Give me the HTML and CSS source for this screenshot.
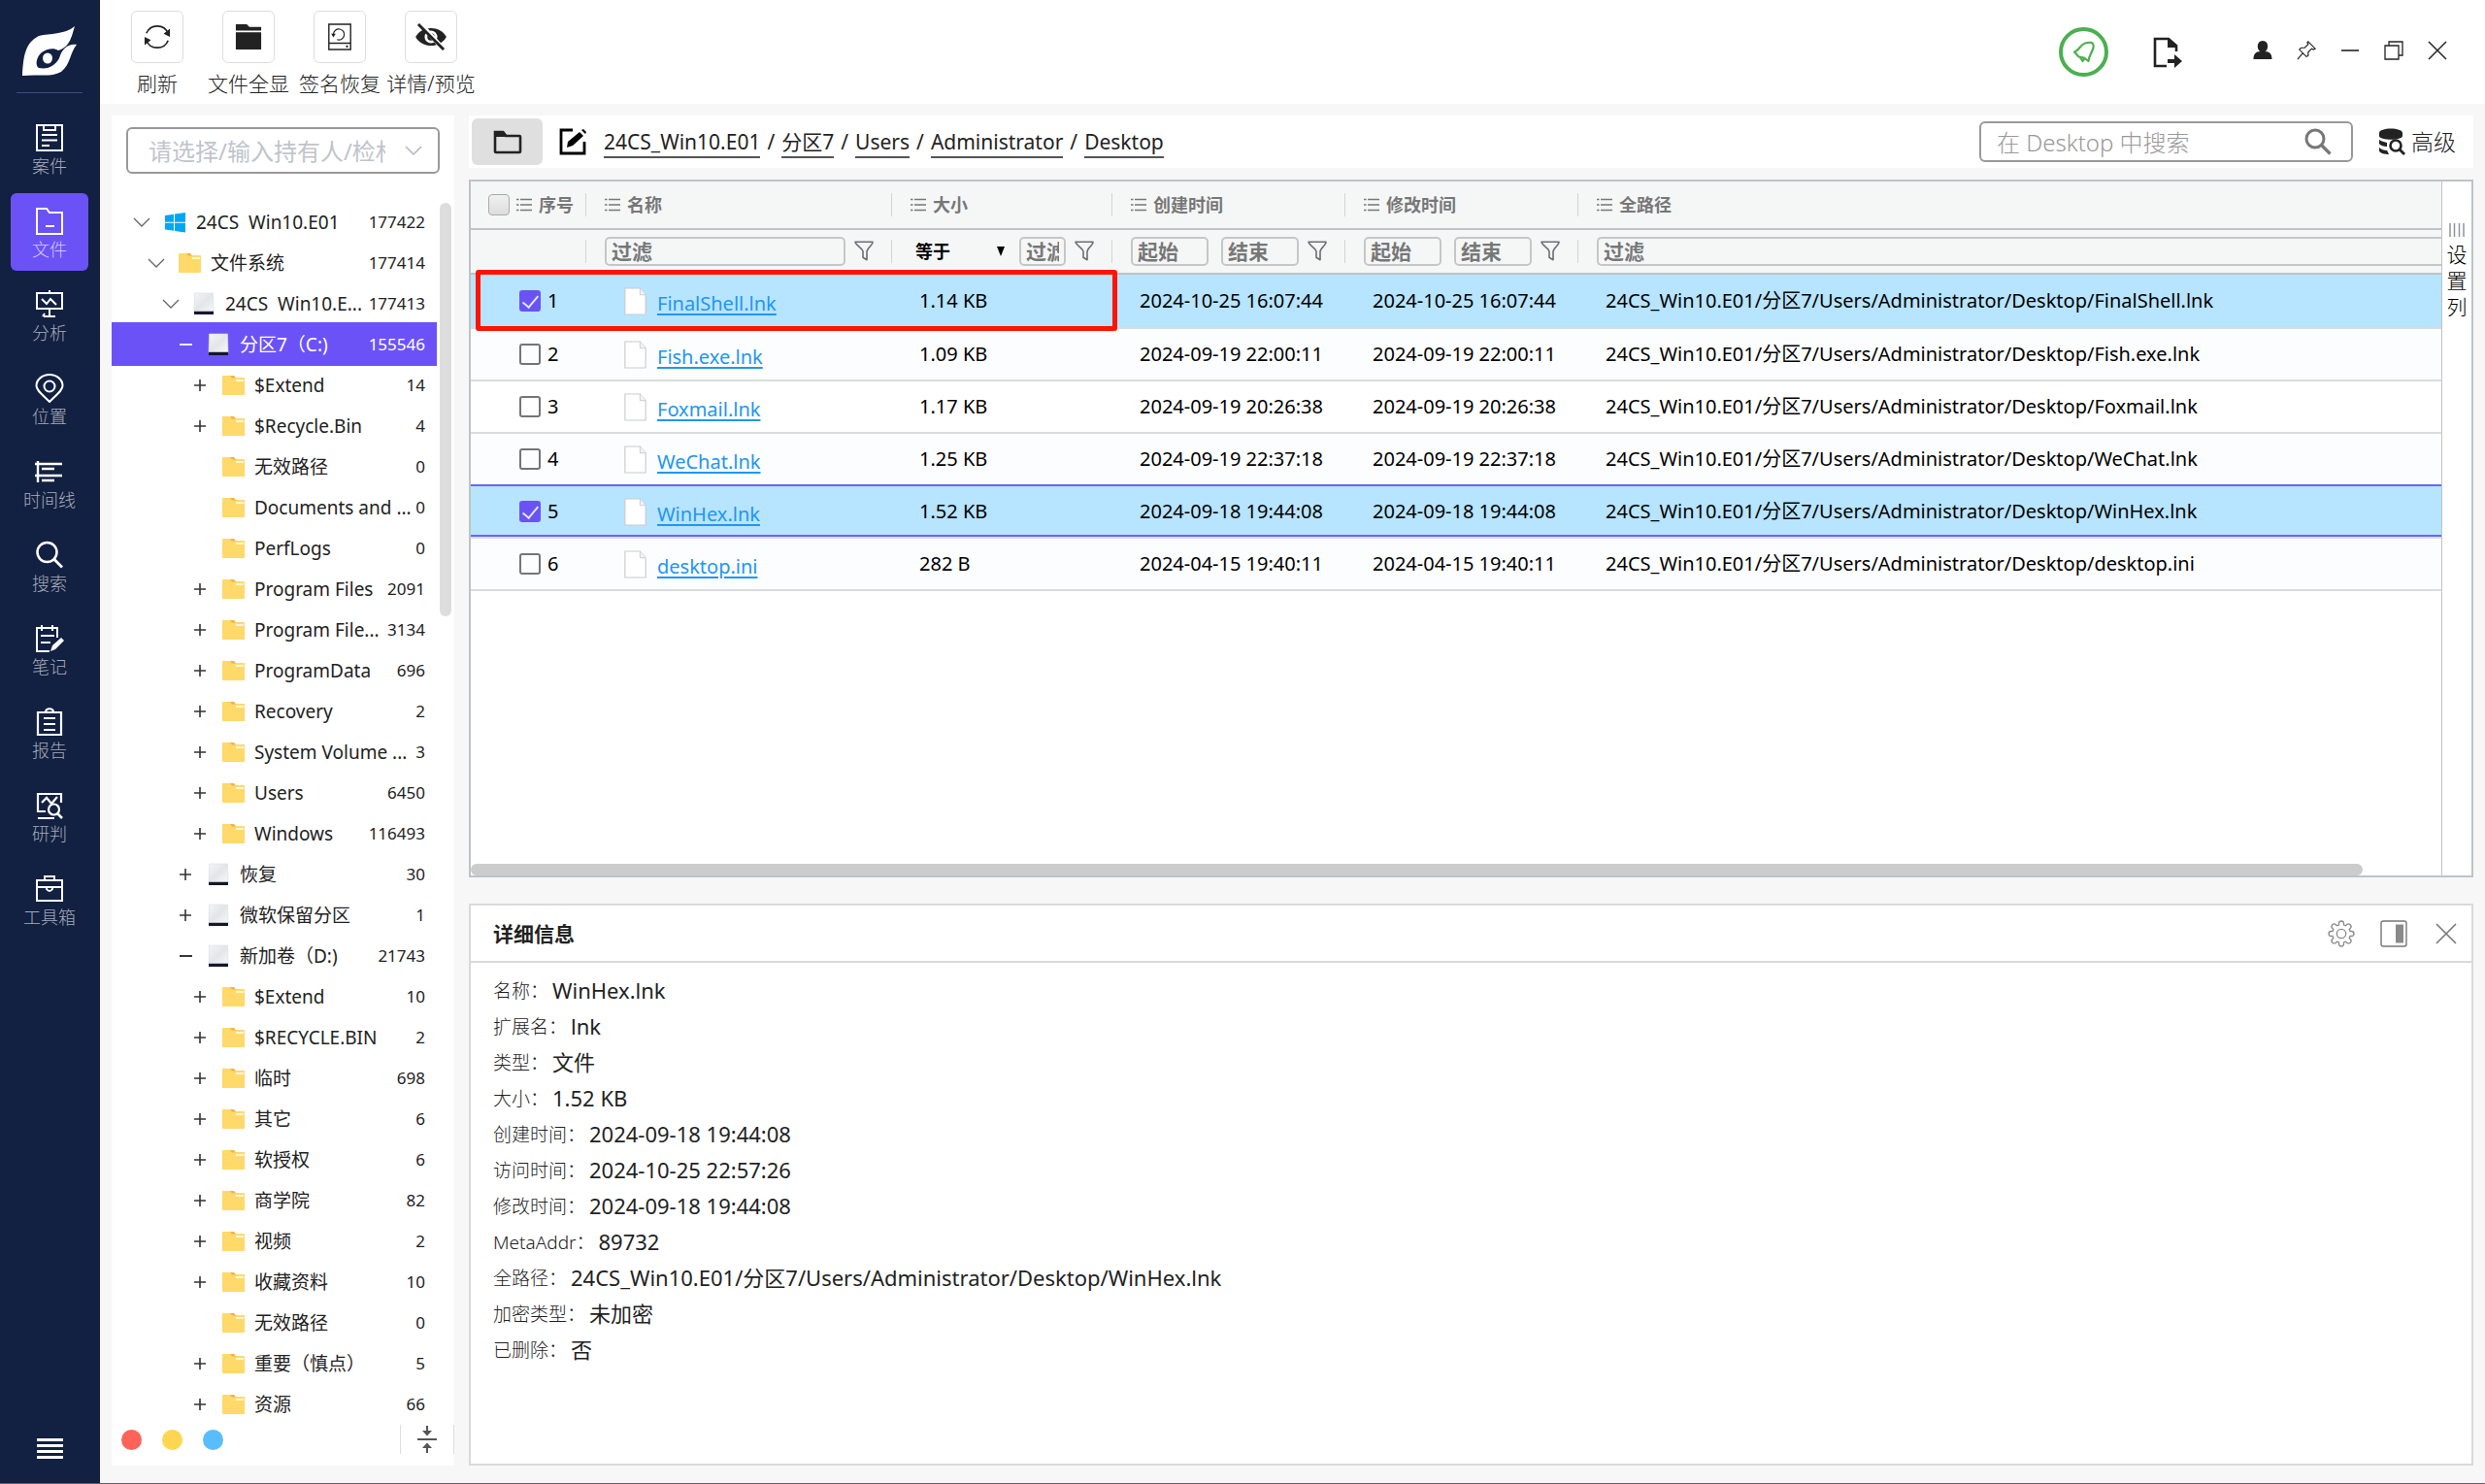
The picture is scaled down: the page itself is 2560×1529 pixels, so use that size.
FILE: index.html
```html
<!DOCTYPE html>
<html lang="zh-CN">
<head>
<meta charset="utf-8">
<title>文件</title>
<link rel="stylesheet" href="styles.css">
</head>
<body>
<svg class="defs" aria-hidden="true">
  <linearGradient id="g-drive" x1="0" y1="0" x2="1" y2="1"><stop offset="0" stop-color="#f4f5f7"/><stop offset=".5" stop-color="#e3e5e9"/><stop offset="1" stop-color="#f7f8f9"/></linearGradient>
  <symbol id="i-down" viewBox="0 0 18 10"><path d="M1 1l8 8 8-8" fill="none" stroke="#666" stroke-width="1.3"/></symbol>
  <symbol id="i-plus" viewBox="0 0 18 18"><path d="M3 9h12M9 3v12" stroke="#333" stroke-width="1.6"/></symbol>
  <symbol id="i-minus" viewBox="0 0 18 18"><path d="M3 9h13" stroke="currentColor" stroke-width="1.800"/></symbol>
  <symbol id="i-folder" viewBox="0 0 24 22"><path d="M1 1.500q0-.5.500-.5h11l2 2h9q.5 0 .5.500v17q0 .5-.5.500h-22q-.5 0-.5-.5z" fill="#ffd96a"/><path d="M9 1h4l2 2.500h-4z" fill="#f3b04a"/><path d="M15 6h8" stroke="#fff" stroke-width="1.5"/></symbol>
  <symbol id="i-drive" viewBox="0 0 24 24"><path d="M2.500 1h19l.5 19.500H2z" fill="url(#g-drive)" stroke="#dcdee2" stroke-width=".6"/><path d="M2 20h20v2.500q0 .5-1 .5h-18q-1 0-1-.5z" fill="#15172b"/><path d="M2 19.500h20" stroke="#b9bcc2" stroke-width="1"/></symbol>
  <symbol id="i-win" viewBox="0 0 24 24"><path d="M2 5l9-1.300v8H2zM12 3.500L23 2v9.700H12zM2 12.700h9v8L2 19.500zM12 12.700h11v9.800L12 21z" fill="#00a8f3"/></symbol>
  <symbol id="i-funnel" viewBox="0 0 20 22"><path d="M1 1.200h18c0 3.500-6 7-6 10v8.500l-4-2.500v-6c0-3-7.500-6.500-8-10z" fill="none" stroke="#6b6f72" stroke-width="1.600" stroke-linejoin="round"/></symbol>
  <symbol id="i-list" viewBox="0 0 16 14"><path d="M0 1.500h2.500M0 7h2.500M0 12.500h2.500M4 1.500h12M4 7h12M4 12.500h12" stroke="#777" stroke-width="1.500"/></symbol>
  <symbol id="i-doc" viewBox="0 0 24 30"><path d="M1 1h16l6 7v21H1z" fill="#fff" stroke="#c9ccd0" stroke-width="1.200"/><path d="M17 1v7h6" fill="#f3f4f6" stroke="#c9ccd0"/></symbol>
  <symbol id="i-search" viewBox="0 0 28 28"><circle cx="11" cy="11" r="9" fill="none" stroke="currentColor" stroke-width="3"/><path d="M17.500 17.500l9 9" stroke="currentColor" stroke-width="3.200"/></symbol>
</svg>

<nav class="side">
  <svg class="logo" viewBox="0 0 58 54"><path d="M1 52C2 32 4 18 18 11C30 8 44 10 55 1C52 10 51 22 38 26C34 23 26 24 21 28C15 33 14 42 18 44C28 46 35 41 39 34C42 24 48 19 57 20C50 28 51 40 41 48C30 54 18 50 1 52z" fill="#fff"/><ellipse cx="27" cy="34" rx="5" ry="5.500" fill="#fff"/></svg>
  <ul class="menu">
    <li><a href="#"><svg viewBox="0 0 30 30"><path d="M2 2h26v26H2z M9 2v5h12V2M7 12h16M7 17.500h16M7 23h8" fill="none" stroke="#fff" stroke-width="2"/></svg>案件</a></li>
    <li><a href="#" class="on"><svg viewBox="0 0 30 30"><path d="M2 2h10l3 4h13v22H2zM11 20h9" fill="none" stroke="#fff" stroke-width="2"/></svg>文件</a></li>
    <li><a href="#"><svg viewBox="0 0 30 30"><path d="M15 0v3M2 3h26v16H2zM7 9l5 5 4-5 6 6M15 19v8M9 27h12M10 24l-2 3" fill="none" stroke="#fff" stroke-width="2"/></svg>分析</a></li>
    <li><a href="#"><svg viewBox="0 0 30 30"><path d="M15 29C7 21 1.500 17 1.500 12.500a13.500 11.500 0 0 1 27 0C28.500 17 23 21 15 29z" fill="none" stroke="#fff" stroke-width="2"/><circle cx="15" cy="13" r="5.500" fill="none" stroke="#fff" stroke-width="2"/></svg>位置</a></li>
    <li><a href="#"><svg viewBox="0 0 30 30"><path d="M3 4v22M0 7h28M7 12h13M0 19h28M7 24h13" fill="none" stroke="#fff" stroke-width="2.400"/></svg>时间线</a></li>
    <li><a href="#"><svg viewBox="0 0 30 30"><circle cx="12.500" cy="12" r="10" fill="none" stroke="#fff" stroke-width="2.500"/><path d="M19.500 19l8.500 8.500" stroke="#fff" stroke-width="2.800"/></svg>搜索</a></li>
    <li><a href="#"><svg viewBox="0 0 30 30"><path d="M23 14V4H2v24h13M7 1v6M18 1v6M6 12h14M6 19h10" fill="none" stroke="#fff" stroke-width="2"/><path d="M16 28l2-6 9-8 3 3-9 9z" fill="#fff"/></svg>笔记</a></li>
    <li><a href="#"><svg viewBox="0 0 30 30"><path d="M3 5h24v23H3zM11 5c0-5 8-5 8 0M9 11h12M9 17h12M9 23h12" fill="none" stroke="#fff" stroke-width="2.200"/></svg>报告</a></li>
    <li><a href="#"><svg viewBox="0 0 30 30"><path d="M11 21H3V3h24v9M3 28h17M7 12l5-5 5 6 6-7" fill="none" stroke="#fff" stroke-width="2.200"/><circle cx="19.500" cy="19" r="5.500" fill="none" stroke="#fff" stroke-width="2.200"/><path d="M23 23l5 5" stroke="#fff" stroke-width="2.500"/></svg>研判</a></li>
    <li><a href="#"><svg viewBox="0 0 30 30"><path d="M2 6h26v21H2zM10 6V2h10v4M2 13h26M12 13v2q3 4 6 0v-2" fill="none" stroke="#fff" stroke-width="2"/></svg>工具箱</a></li>
  </ul>
  <button class="burger" aria-label="菜单"><i></i><i></i><i></i><i></i></button>
</nav>

<div class="app">
  <header class="top">
    <div class="tools">
      <button class="tool"><span class="box"><svg viewBox="0 0 30 30"><path d="M3 11a13 13 0 0 1 24 0M27 19a13 13 0 0 1-24 0" fill="none" stroke="#222" stroke-width="1.800"/><path d="M29 6v9l-7-3.500zM1 24v-9l7 3.500z" fill="#222"/></svg></span>刷新</button>
      <button class="tool"><span class="box"><svg viewBox="0 0 30 30"><path d="M1 1h12l3 3h13v4H1zM1 10h28v19H1z" fill="#222"/></svg></span>文件全显</button>
      <button class="tool"><span class="box"><svg viewBox="0 0 30 30"><path d="M3 1h24v28H3zM3 22h24" fill="none" stroke="#222" stroke-width="1.500"/><path d="M12 18a6 6 0 1 0-4-6" fill="none" stroke="#222" stroke-width="1.300"/><path d="M5.500 11.500h5l-2.500 4z" fill="#222"/><circle cx="23" cy="25.500" r="1.200"/></svg></span>签名恢复</button>
      <button class="tool"><span class="box"><svg class="wide" viewBox="0 0 36 30"><path d="M1 15C8 2 28 2 35 15C28 28 8 28 1 15z" fill="#222"/><circle cx="18" cy="15" r="7" fill="#fff"/><circle cx="18" cy="15" r="4" fill="#222"/><path d="M6 0l26 29" stroke="#fff" stroke-width="5"/><path d="M4 1l28 28" stroke="#222" stroke-width="3"/></svg></span>详情/预览</button>
    </div>
    <div class="win">
      <button class="bell" aria-label="通知"><svg viewBox="0 0 24 24"><path d="M2 11.500C7 10 8 4 13 2.500C17 1.500 21 1 21.500 4C23 9 17 14 16.500 21L12 17.500L6.500 16.500z M8 17l2.500 4 2-3" fill="none" stroke="#4caf50" stroke-width="2.200" stroke-linejoin="round"/></svg></button>
      <button class="exp" aria-label="导出"><svg viewBox="0 0 30 32"><path d="M24 15V9L16 2H2v28h12" fill="none" stroke="#222" stroke-width="2.600"/><path d="M15 1v10h10zM15 23h7v-5l8 7-8 7v-5h-7z" fill="#222"/></svg></button>
      <button aria-label="用户"><svg viewBox="0 0 20 20"><path d="M10 0c7 0 6 10 2.500 11 5 0 7 3 7 8H.5c0-5 2-8 7-8C4 10 3 0 10 0z" fill="#222"/></svg></button>
      <button aria-label="置顶"><svg viewBox="0 0 22 22"><path d="M13 1l8 8-2 1-2-1-4 4v4l-2 1-8-8 2-2h4l4-4-1-2zM7 14l-6 7" fill="none" stroke="#222" stroke-width="1.300"/></svg></button>
      <button aria-label="最小化"><svg viewBox="0 0 20 20"><path d="M1 10h18" stroke="#222" stroke-width="1.600"/></svg></button>
      <button aria-label="还原"><svg viewBox="0 0 20 20"><path d="M1 5h14v14H1zM5 5V1h14v14h-4" fill="none" stroke="#222" stroke-width="1.300"/></svg></button>
      <button aria-label="关闭"><svg viewBox="0 0 20 20"><path d="M1 1l18 18M19 1L1 19" stroke="#222" stroke-width="1.500"/></svg></button>
    </div>
  </header>

  <div class="work">
    <aside class="tree-panel">
      <label class="owner"><input type="text" placeholder="请选择/输入持有人/检材" aria-label="持有人"><svg viewBox="0 0 18 10"><path d="M1 1l8 8 8-8" fill="none" stroke="#b4b8c0" stroke-width="1.600"/></svg></label>
      <div class="tree-wrap">
        <ul class="tree">
          <li class="l0"><button><svg class="dn"><use href="#i-down"/></svg></button><svg class="ic"><use href="#i-win"/></svg><span>24CS&nbsp; Win10.E01</span><b>177422</b></li>
          <li class="l1"><button><svg class="dn"><use href="#i-down"/></svg></button><svg class="ic"><use href="#i-folder"/></svg><span>文件系统</span><b>177414</b></li>
          <li class="l2"><button><svg class="dn"><use href="#i-down"/></svg></button><svg class="ic"><use href="#i-drive"/></svg><span>24CS&nbsp; Win10.E...</span><b>177413</b></li>
          <li class="l3 sel"><button><svg><use href="#i-minus"/></svg></button><svg class="ic"><use href="#i-drive"/></svg><span>分区7（C:)</span><b>155546</b></li>
          <li class="l4"><button><svg><use href="#i-plus"/></svg></button><svg class="ic"><use href="#i-folder"/></svg><span>$Extend</span><b>14</b></li>
          <li class="l4"><button><svg><use href="#i-plus"/></svg></button><svg class="ic"><use href="#i-folder"/></svg><span>$Recycle.Bin</span><b>4</b></li>
          <li class="l4 leaf"><svg class="ic"><use href="#i-folder"/></svg><span>无效路径</span><b>0</b></li>
          <li class="l4 leaf"><svg class="ic"><use href="#i-folder"/></svg><span>Documents and ...</span><b>0</b></li>
          <li class="l4 leaf"><svg class="ic"><use href="#i-folder"/></svg><span>PerfLogs</span><b>0</b></li>
          <li class="l4"><button><svg><use href="#i-plus"/></svg></button><svg class="ic"><use href="#i-folder"/></svg><span>Program Files</span><b>2091</b></li>
          <li class="l4"><button><svg><use href="#i-plus"/></svg></button><svg class="ic"><use href="#i-folder"/></svg><span>Program File...</span><b>3134</b></li>
          <li class="l4"><button><svg><use href="#i-plus"/></svg></button><svg class="ic"><use href="#i-folder"/></svg><span>ProgramData</span><b>696</b></li>
          <li class="l4"><button><svg><use href="#i-plus"/></svg></button><svg class="ic"><use href="#i-folder"/></svg><span>Recovery</span><b>2</b></li>
          <li class="l4"><button><svg><use href="#i-plus"/></svg></button><svg class="ic"><use href="#i-folder"/></svg><span>System Volume ...</span><b>3</b></li>
          <li class="l4"><button><svg><use href="#i-plus"/></svg></button><svg class="ic"><use href="#i-folder"/></svg><span>Users</span><b>6450</b></li>
          <li class="l4"><button><svg><use href="#i-plus"/></svg></button><svg class="ic"><use href="#i-folder"/></svg><span>Windows</span><b>116493</b></li>
          <li class="l3"><button><svg><use href="#i-plus"/></svg></button><svg class="ic"><use href="#i-drive"/></svg><span>恢复</span><b>30</b></li>
          <li class="l3"><button><svg><use href="#i-plus"/></svg></button><svg class="ic"><use href="#i-drive"/></svg><span>微软保留分区</span><b>1</b></li>
          <li class="l3"><button><svg><use href="#i-minus"/></svg></button><svg class="ic"><use href="#i-drive"/></svg><span>新加卷（D:)</span><b>21743</b></li>
          <li class="l4"><button><svg><use href="#i-plus"/></svg></button><svg class="ic"><use href="#i-folder"/></svg><span>$Extend</span><b>10</b></li>
          <li class="l4"><button><svg><use href="#i-plus"/></svg></button><svg class="ic"><use href="#i-folder"/></svg><span>$RECYCLE.BIN</span><b>2</b></li>
          <li class="l4"><button><svg><use href="#i-plus"/></svg></button><svg class="ic"><use href="#i-folder"/></svg><span>临时</span><b>698</b></li>
          <li class="l4"><button><svg><use href="#i-plus"/></svg></button><svg class="ic"><use href="#i-folder"/></svg><span>其它</span><b>6</b></li>
          <li class="l4"><button><svg><use href="#i-plus"/></svg></button><svg class="ic"><use href="#i-folder"/></svg><span>软授权</span><b>6</b></li>
          <li class="l4"><button><svg><use href="#i-plus"/></svg></button><svg class="ic"><use href="#i-folder"/></svg><span>商学院</span><b>82</b></li>
          <li class="l4"><button><svg><use href="#i-plus"/></svg></button><svg class="ic"><use href="#i-folder"/></svg><span>视频</span><b>2</b></li>
          <li class="l4"><button><svg><use href="#i-plus"/></svg></button><svg class="ic"><use href="#i-folder"/></svg><span>收藏资料</span><b>10</b></li>
          <li class="l4 leaf"><svg class="ic"><use href="#i-folder"/></svg><span>无效路径</span><b>0</b></li>
          <li class="l4"><button><svg><use href="#i-plus"/></svg></button><svg class="ic"><use href="#i-folder"/></svg><span>重要（慎点）</span><b>5</b></li>
          <li class="l4"><button><svg><use href="#i-plus"/></svg></button><svg class="ic"><use href="#i-folder"/></svg><span>资源</span><b>66</b></li>
        </ul>
        <div class="vbar"></div>
      </div>
      <div class="tree-foot">
        <i class="dot red"></i><i class="dot yellow"></i><i class="dot blue"></i>
        <button class="fold" aria-label="折叠"><svg viewBox="0 0 20 28"><path d="M0 14h20M10 0v7M10 28v-7" stroke="#555" stroke-width="2"/><path d="M5 5h10l-5 5.500zM5 23h10l-5-5.500z" fill="#555"/></svg></button>
      </div>
    </aside>

    <main class="main">
      <div class="crumb">
        <button class="up" aria-label="文件夹"><svg viewBox="0 0 30 26"><path d="M2 23V3h8l3 4h14q1 0 1 1v15q0 1-1 1H3q-1 0-1-1z" fill="none" stroke="#222" stroke-width="2.600"/><path d="M1 2h10l3 4v2H1z" fill="#222"/></svg></button>
        <button class="edit" aria-label="编辑"><svg viewBox="0 0 28 28"><path d="M14 2H2v24h24V14" fill="none" stroke="#000" stroke-width="2.800"/><path d="M8 20l1-6L21 4l4 4L14 18zM23 2l2-1 3 3-1 2z" fill="#000"/></svg></button>
        <p class="path"><a href="#">24CS_Win10.E01</a><i>/</i><a href="#">分区7</a><i>/</i><a href="#">Users</a><i>/</i><a href="#">Administrator</a><i>/</i><a href="#">Desktop</a></p>
        <label class="find"><input type="text" placeholder="在 Desktop 中搜索" aria-label="搜索"><svg><use href="#i-search"/></svg></label>
        <button class="adv"><svg viewBox="0 0 28 28"><path d="M1 5C1-1 25-1 25 5v3C25 13 1 13 1 8zM1 12c3 2 6 2 8 3v4c-3 0-7-1-8-3zM1 20c2 2 5 3 8 3l2 4c-4 0-10-1-10-4z" fill="#222"/><circle cx="18" cy="18" r="5.500" fill="#fff" stroke="#222" stroke-width="2.600"/><path d="M22 22l5 5" stroke="#222" stroke-width="2.800"/></svg>高级</button>
      </div>

      <section class="grid">
        <div class="grid-body">
          <table>
            <colgroup><col class="c1"><col class="c2"><col class="c3"><col class="c4"><col class="c4"><col></colgroup>
            <thead>
              <tr class="heads">
                <th><div class="hd first"><input type="checkbox" class="all" aria-label="全选"><svg><use href="#i-list"/></svg>序号</div></th>
                <th><div class="hd"><svg><use href="#i-list"/></svg>名称</div></th>
                <th><div class="hd"><svg><use href="#i-list"/></svg>大小</div></th>
                <th><div class="hd"><svg><use href="#i-list"/></svg>创建时间</div></th>
                <th><div class="hd"><svg><use href="#i-list"/></svg>修改时间</div></th>
                <th><div class="hd"><svg><use href="#i-list"/></svg>全路径</div></th>
              </tr>
              <tr class="filters">
                <th></th>
                <th><div class="ft"><input type="text" placeholder="过滤" aria-label="过滤名称"><svg><use href="#i-funnel"/></svg></div></th>
                <th><div class="ft"><span class="op"><select aria-label="比较"><option>等于</option></select></span><input class="xs" type="text" placeholder="过滤" aria-label="过滤大小"><svg><use href="#i-funnel"/></svg></div></th>
                <th><div class="ft dates"><input type="text" placeholder="起始" aria-label="创建起始"><input type="text" placeholder="结束" aria-label="创建结束"><svg><use href="#i-funnel"/></svg></div></th>
                <th><div class="ft dates"><input type="text" placeholder="起始" aria-label="修改起始"><input type="text" placeholder="结束" aria-label="修改结束"><svg><use href="#i-funnel"/></svg></div></th>
                <th><div class="ft last"><input type="text" placeholder="过滤" aria-label="过滤路径"></div></th>
              </tr>
            </thead>
            <tbody>
              <tr class="picked tall"><td><label><input type="checkbox" checked>1</label></td><td><div class="nm"><svg><use href="#i-doc"/></svg><a href="#">FinalShell.lnk</a></div></td><td>1.14 KB</td><td>2024-10-25 16:07:44</td><td>2024-10-25 16:07:44</td><td>24CS_Win10.E01/分区7/Users/Administrator/Desktop/FinalShell.lnk</td></tr>
              <tr><td><label><input type="checkbox">2</label></td><td><div class="nm"><svg><use href="#i-doc"/></svg><a href="#">Fish.exe.lnk</a></div></td><td>1.09 KB</td><td>2024-09-19 22:00:11</td><td>2024-09-19 22:00:11</td><td>24CS_Win10.E01/分区7/Users/Administrator/Desktop/Fish.exe.lnk</td></tr>
              <tr><td><label><input type="checkbox">3</label></td><td><div class="nm"><svg><use href="#i-doc"/></svg><a href="#">Foxmail.lnk</a></div></td><td>1.17 KB</td><td>2024-09-19 20:26:38</td><td>2024-09-19 20:26:38</td><td>24CS_Win10.E01/分区7/Users/Administrator/Desktop/Foxmail.lnk</td></tr>
              <tr class="before"><td><label><input type="checkbox">4</label></td><td><div class="nm"><svg><use href="#i-doc"/></svg><a href="#">WeChat.lnk</a></div></td><td>1.25 KB</td><td>2024-09-19 22:37:18</td><td>2024-09-19 22:37:18</td><td>24CS_Win10.E01/分区7/Users/Administrator/Desktop/WeChat.lnk</td></tr>
              <tr class="picked focus"><td><label><input type="checkbox" checked>5</label></td><td><div class="nm"><svg><use href="#i-doc"/></svg><a href="#">WinHex.lnk</a></div></td><td>1.52 KB</td><td>2024-09-18 19:44:08</td><td>2024-09-18 19:44:08</td><td>24CS_Win10.E01/分区7/Users/Administrator/Desktop/WinHex.lnk</td></tr>
              <tr><td><label><input type="checkbox">6</label></td><td><div class="nm"><svg><use href="#i-doc"/></svg><a href="#">desktop.ini</a></div></td><td>282 B</td><td>2024-04-15 19:40:11</td><td>2024-04-15 19:40:11</td><td>24CS_Win10.E01/分区7/Users/Administrator/Desktop/desktop.ini</td></tr>
            </tbody>
          </table>
          <div class="hbar"></div>
        </div>
        <button class="cols"><svg viewBox="0 0 16 14"><path d="M1 0v14M5.500 0v14M10.500 0v14M15 0v14" stroke="#8c979c" stroke-width="1.500"/></svg><span>设置列</span></button>
        <div class="mark"></div>
      </section>

      <section class="detail">
        <div class="detail-head">
          <h2>详细信息</h2>
          <button aria-label="设置"><svg viewBox="0 0 28 28"><path d="M11.500 3.500a2.500 2.500 0 0 1 5 0v1.500l2 .8 1-1a2.500 2.500 0 0 1 3.700 3.700l-1 1 .8 2h1.500a2.500 2.500 0 0 1 0 5h-1.500l-.8 2 1 1a2.500 2.500 0 0 1-3.700 3.700l-1-1-2 .8v1.500a2.500 2.500 0 0 1-5 0v-1.500l-2-.8-1 1a2.500 2.500 0 0 1-3.700-3.700l1-1-.8-2H3.500a2.500 2.500 0 0 1 0-5h1.500l.8-2-1-1a2.500 2.500 0 0 1 3.700-3.700l1 1 2-.8z" fill="none" stroke="#8a8a8a" stroke-width="1.300"/><circle cx="14" cy="14" r="4.700" fill="none" stroke="#8a8a8a" stroke-width="1.300"/></svg></button>
          <button aria-label="布局"><svg viewBox="0 0 28 28"><rect x="1" y="1" width="26" height="26" rx="2" fill="none" stroke="#777" stroke-width="1.400"/><path d="M16 4.500h8v19h-8z" fill="#8a8a8a"/></svg></button>
          <button aria-label="关闭"><svg viewBox="0 0 28 28"><path d="M4 4l20 20M24 4L4 24" stroke="#777" stroke-width="1.600"/></svg></button>
        </div>
        <dl>
          <div><dt>名称：</dt><dd>WinHex.lnk</dd></div>
          <div><dt>扩展名：</dt><dd>lnk</dd></div>
          <div><dt>类型：</dt><dd>文件</dd></div>
          <div><dt>大小：</dt><dd>1.52 KB</dd></div>
          <div><dt>创建时间：</dt><dd>2024-09-18 19:44:08</dd></div>
          <div><dt>访问时间：</dt><dd>2024-10-25 22:57:26</dd></div>
          <div><dt>修改时间：</dt><dd>2024-09-18 19:44:08</dd></div>
          <div><dt>MetaAddr：</dt><dd>89732</dd></div>
          <div><dt>全路径：</dt><dd>24CS_Win10.E01/分区7/Users/Administrator/Desktop/WinHex.lnk</dd></div>
          <div><dt>加密类型：</dt><dd>未加密</dd></div>
          <div><dt>已删除：</dt><dd>否</dd></div>
        </dl>
      </section>
    </main>
  </div>
</div>
</body>
</html>
```
FILE: styles.css
```css
* { box-sizing: border-box; }
body {
  margin: 0;
  height: 100vh;
  display: flex;
  overflow: hidden;
  background: #f7f7f7;
  border-bottom: 1px solid #6e5a64;
  color: #222;
  font: 20px/24px "Noto Sans", "Noto Sans CJK SC", sans-serif;
}
ul, dl, dd, p, h2 { margin: 0; padding: 0; }
ul { list-style: none; }
svg { display: block; flex: none; }
.defs { position: absolute; width: 0; height: 0; }
button { padding: 0; border: 0; background: none; color: inherit; font: inherit; }
input, select { font: inherit; color: inherit; margin: 0; }

/* side navigation */
.side {
  flex: none;
  width: 103px;
  padding: 26px 12px 25px 11px;
  display: flex;
  flex-direction: column;
  align-items: center;
  background: #122041;
}
.logo { width: 58px; height: 54px; }
.menu {
  width: 80px;
  margin-top: 15px;
  padding-top: 18px;
  display: flex;
  flex-direction: column;
  gap: 6px;
  background: linear-gradient(#3b4c86, #3b4c86) center top / 68px 1px no-repeat;
}
.menu a {
  height: 80px;
  padding-top: 14px;
  display: flex;
  flex-direction: column;
  align-items: center;
  gap: 2px;
  border-radius: 6px;
  color: #a6abb9;
  font-size: 18px;
  font-weight: 300;
  text-decoration: none;
}
.menu svg { width: 30px; height: 30px; }
.menu .on { background: #6b52f6; color: #cfc6ff; }
.burger { width: 27px; margin-top: auto; display: grid; gap: 3px; }
.burger i { height: 3px; background: #fff; }

/* top bar */
.app { flex: 1; min-width: 0; display: flex; flex-direction: column; }
.top {
  flex: none;
  height: 107px;
  padding: 11px 27px 0 12px;
  display: flex;
  justify-content: space-between;
  background: #fff;
}
.tools { display: flex; }
.tool {
  width: 94px;
  display: flex;
  flex-direction: column;
  align-items: center;
  align-self: flex-start;
  gap: 9px;
  font-size: 21px;
  font-weight: 300;
  white-space: nowrap;
}
.box {
  width: 54px;
  height: 54px;
  display: grid;
  place-items: center;
  border: 1px solid #ddd;
  border-radius: 6px;
}
.box svg { width: 28px; height: 28px; }
.box .wide { width: 34px; }
.win { height: 85px; display: flex; align-items: center; align-self: flex-start; }
.win button { width: 45px; height: 20px; margin-bottom: 4px; display: grid; place-items: center; }
.win svg { width: 20px; height: 20px; }
.win .bell { width: 51px; height: 51px; margin: 0; border: 4px solid #4caf50; border-radius: 50%; }
.win .bell svg { width: 24px; height: 24px; }
.win .exp { width: 30px; height: 32px; margin: 0 60px 0 46px; }
.win .exp svg { width: 30px; height: 32px; }

/* tree */
.work {
  flex: 1;
  min-height: 0;
  padding: 12px 12px 18px;
  display: flex;
  gap: 15px;
}
.tree-panel {
  flex: none;
  width: 353px;
  padding: 12px 0 11px;
  display: flex;
  flex-direction: column;
  background: #fff;
}
.owner {
  flex: none;
  height: 48px;
  margin: 0 15px 29px;
  padding: 0 16px 0 21px;
  display: flex;
  align-items: center;
  gap: 20px;
  border: 2px solid #999;
  border-radius: 6px;
}
.owner input { flex: 1; min-width: 0; padding: 0; border: 0; font-size: 24px; background: none; }
.owner input::placeholder { color: #c0c4cc; }
.owner svg { width: 18px; height: 10px; }
.tree-wrap { flex: 1; min-height: 0; overflow: hidden; display: flex; gap: 3px; }
.tree { flex: 1; min-width: 0; }
.tree li {
  height: 42px;
  padding-right: 12px;
  display: flex;
  align-items: center;
  font-size: 19px;
  white-space: nowrap;
}
.tree .l0 { padding-left: 22px; }
.tree .l1 { padding-left: 37px; }
.tree .l2 { padding-left: 52px; }
.tree .l3 { padding-left: 67px; }
.tree .l4 { padding-left: 82px; }
.tree .leaf { padding-left: 113px; }
.tree .sel { height: 45px; margin: -2px 0 -1px; background: #6b52f6; color: #fff; }
.tree button { width: 18px; margin-right: 13px; }
.tree button svg { width: 18px; height: 18px; }
.tree button .dn { height: 10px; }
.tree .ic { width: 24px; height: 24px; margin-right: 10px; }
.tree span { flex: 1; min-width: 0; }
.tree b { font-size: 17px; font-weight: 400; }
.vbar { width: 12px; height: 426px; margin: 1px 3px 0 0; border-radius: 6px; background: #ddd; }
.tree-foot { flex: none; height: 32px; padding-left: 10px; display: flex; align-items: center; gap: 21px; }
.dot { width: 21px; height: 21px; border-radius: 50%; }
.red { background: #ff6259; }
.yellow { background: #ffd64f; }
.blue { background: #59bdfb; }
.fold {
  width: 56px;
  height: 30px;
  margin-left: auto;
  display: grid;
  place-items: center;
  border: solid #ddd;
  border-width: 0 1px;
}
.fold svg { width: 20px; height: 28px; }

/* path bar */
.main {
  flex: 1;
  min-width: 0;
  display: grid;
  grid-template-rows: 54px minmax(0, 731fr) minmax(0, 606fr);
}
.crumb { padding: 0 18px 0 3px; display: flex; align-items: center; background: #fff; }
.up { width: 73px; height: 48px; display: grid; place-items: center; border-radius: 6px; background: #dfdfdf; }
.up svg { width: 30px; height: 26px; }
.edit { margin: 0 18px 0 17px; }
.edit svg { width: 28px; height: 28px; }
.path { font-size: 21px; white-space: nowrap; }
.path a { color: inherit; text-decoration: none; padding-bottom: 1px; border-bottom: 2px solid #555; }
.path i { margin: 0 7px; font-style: normal; }
.find {
  width: 385px;
  height: 42px;
  margin-left: auto;
  padding: 0 20px 0 16px;
  display: flex;
  align-items: center;
  border: 2px solid #999;
  border-radius: 6px;
}
.find input { flex: 1; min-width: 0; padding: 0; border: 0; font-size: 24px; font-weight: 300; background: none; }
.find input::placeholder { color: #999; }
.find svg { width: 28px; height: 28px; color: #777; }
.adv { margin-left: 26px; display: flex; align-items: center; gap: 6px; font-size: 23px; font-weight: 300; }
.adv svg { width: 28px; height: 28px; }

/* file table */
.grid {
  position: relative;
  margin-top: 12px;
  min-height: 0;
  display: flex;
  border: 2px solid #bdc3c7;
  background: #fff;
}
.grid-body { flex: 1; min-width: 0; display: flex; flex-direction: column; overflow: hidden; }
table { width: 100%; table-layout: fixed; border-spacing: 0; color: #000; }
.c1 { width: 119px; }
.c2 { width: 315px; }
.c3 { width: 227px; }
.c4 { width: 240px; }
th, td { padding: 0; text-align: left; white-space: nowrap; }
th {
  background: #f5f7f7 linear-gradient(#d0d3d5, #d0d3d5) right center / 1px 24px no-repeat;
  border-bottom: 2px solid #bdc3c7;
  color: #777;
}
th:last-child { background-image: none; }
.heads th { height: 50px; }
.filters th { height: 46px; }
.hd { padding-left: 19px; display: flex; align-items: center; gap: 7px; font-size: 18px; font-weight: 700; }
.hd svg { width: 16px; height: 14px; }
.first { padding-left: 18px; }
.all {
  appearance: none;
  width: 22px;
  height: 22px;
  border: 1px solid #aaa;
  border-radius: 4px;
  background: linear-gradient(#f0f0f0, #ddd);
}
.ft { padding: 0 19px; display: flex; align-items: center; gap: 9px; }
.ft input {
  flex: 1;
  min-width: 0;
  height: 30px;
  padding: 0 5px;
  border: 2px solid #c4c7c8;
  border-radius: 5px;
  background: none;
  font-size: 21px;
  font-weight: 700;
}
.ft input::placeholder { color: #777; }
.ft svg { width: 20px; height: 22px; }
.ft .xs { flex: none; width: 48px; }
.op { flex: 1; padding-left: 5px; display: flex; align-items: center; }
.op::after { content: ""; border: solid transparent; border-width: 10px 4px 0; border-top-color: #000; margin-right: 6px; }
.op select { flex: 1; min-width: 0; appearance: none; padding: 0; border: 0; background: none; color: #000; font-size: 18px; font-weight: 700; }
.dates input { flex: none; width: 80px; }
.dates input + input { margin-left: 4px; }
.last { padding-right: 0; }
.last input { border-right: 0; border-radius: 5px 0 0 5px; }

td { height: 54px; padding-left: 28px; border-bottom: 2px solid #d9dcdf; }
td:first-child { padding-left: 50px; }
.tall td { height: 56px; }
tbody tr:nth-child(even) { background: #fcfdfe; }
tbody .picked { background: #b7e4ff; }
.before td { border-bottom-color: #6b66f8; }
.focus td { box-shadow: inset 0 -2px #6b66f8; }
td label { display: flex; align-items: center; gap: 7px; }
td input {
  appearance: none;
  width: 22px;
  height: 22px;
  display: grid;
  place-items: center;
  border: 2px solid #757575;
  border-radius: 3px;
}
td input:checked { border-color: #6b52f6; background: #6b52f6; }
td input:checked::after {
  content: "";
  width: 7px;
  height: 14px;
  margin-bottom: 4px;
  border: solid #d8ecff;
  border-width: 0 2px 2px 0;
  rotate: 40deg;
}
.nm { margin-left: 10px; display: flex; align-items: center; gap: 10px; }
.nm svg { width: 25px; height: 29px; }
.nm a { padding-top: 6px; color: #2196f3; text-underline-offset: 3px; text-decoration-thickness: 2px; }
.hbar { width: 96%; height: 12px; margin-top: auto; border-radius: 6px; background: #ccc; }
.cols {
  flex: none;
  width: 31px;
  padding: 43px 4px 0;
  display: flex;
  flex-direction: column;
  align-items: center;
  gap: 5px;
  border-left: 1px solid #bdc3c7;
  color: #000;
}
.cols svg { width: 16px; height: 14px; }
.cols span { width: 22px; font-size: 21px; font-weight: 300; line-height: 27px; }
.mark {
  position: absolute;
  left: 5px;
  top: 91px;
  width: 661px;
  height: 63px;
  border: 5px solid #ff1400;
  border-radius: 3px;
}

/* details */
.detail { margin-top: 27px; min-height: 0; border: 2px solid #d9d9d9; background: #fff; }
.detail-head {
  height: 59px;
  padding: 0 12px 0 23px;
  display: flex;
  align-items: center;
  gap: 26px;
  border-bottom: 2px solid #d9d9d9;
}
.detail-head h2 { flex: 1; font-size: 21px; line-height: 24px; }
.detail-head svg { width: 28px; height: 28px; }
dl { padding: 9px 23px; }
dl div { height: 37px; display: flex; align-items: center; gap: 4px; }
dt { font-size: 19px; font-weight: 300; padding-top: 2px; }
dd { font-size: 22px; }
```
